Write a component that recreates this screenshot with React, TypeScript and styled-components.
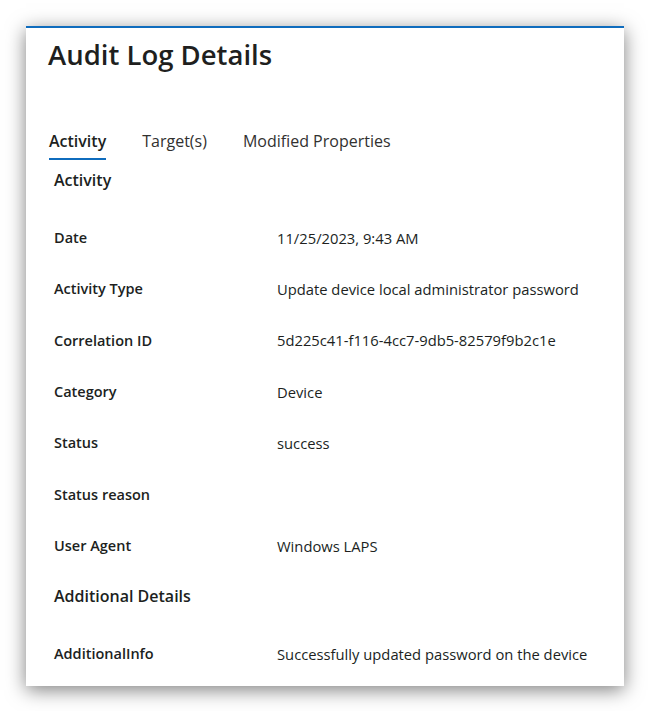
import React from 'react';
import styled, { createGlobalStyle } from 'styled-components';

const GlobalStyle = createGlobalStyle`
  html, body {
    margin: 0;
    padding: 0;
    background: #ffffff;
  }
  body {
    font-family: "Open Sans", "Noto Sans", "Liberation Sans", sans-serif;
    color: #201f1e;
  }
`;

const Page = styled.div`
  padding: 26px 24px 25px 26px;
`;

const Card = styled.div`
  width: 598px;
  height: 660px;
  box-sizing: border-box;
  background: #ffffff;
  border-top: 2px solid #0f6cbd;
  box-shadow: 0 4px 18px rgba(0, 0, 0, 0.5);
  padding: 9px 22px 0 22px;
  overflow: hidden;
`;

const Title = styled.h1`
  margin: 0;
  font-size: 27.5px;
  line-height: 36px;
  font-weight: 600;
  color: #201f1e;
`;

const TabList = styled.div`
  display: flex;
  gap: 36px;
  margin-top: 57px;
  padding-left: 1px;
`;

const Tab = styled.div<{ $active?: boolean }>`
  font-size: 16px;
  line-height: 22px;
  padding-bottom: 6px;
  color: ${p => (p.$active ? '#201f1e' : '#323130')};
  font-weight: ${p => (p.$active ? 600 : 400)};
  border-bottom: 2px solid ${p => (p.$active ? '#0f6cbd' : 'transparent')};
`;

const Section = styled.div`
  padding-left: 6px;
`;

const SectionTitle = styled.h2<{ $first?: boolean }>`
  margin: ${p => (p.$first ? '8px' : '13px')} 0 20px 0;
  font-size: 16px;
  line-height: 24px;
  font-weight: 600;
`;

const Row = styled.div`
  display: grid;
  grid-template-columns: 223px 1fr;
  align-items: center;
  height: 51.33px;
`;

const Label = styled.div`
  font-size: 14.5px;
  font-weight: 600;
  color: #201f1e;
`;

const Value = styled.div`
  font-size: 14.75px;
  color: #201f1e;
`;

const activity: [string, string][] = [
  ['Date', '11/25/2023, 9:43 AM'],
  ['Activity Type', 'Update device local administrator password'],
  ['Correlation ID', '5d225c41-f116-4cc7-9db5-82579f9b2c1e'],
  ['Category', 'Device'],
  ['Status', 'success'],
  ['Status reason', ''],
  ['User Agent', 'Windows LAPS'],
];

export default function App() {
  return (
    <>
      <GlobalStyle />
      <Page>
        <Card>
          <Title>Audit Log Details</Title>
          <TabList>
            <Tab $active>Activity</Tab>
            <Tab>Target(s)</Tab>
            <Tab>Modified Properties</Tab>
          </TabList>
          <Section>
            <SectionTitle $first>Activity</SectionTitle>
            {activity.map(([label, value]) => (
              <Row key={label}>
                <Label>{label}</Label>
                <Value>{value}</Value>
              </Row>
            ))}
            <SectionTitle>Additional Details</SectionTitle>
            <Row>
              <Label>AdditionalInfo</Label>
              <Value>Successfully updated password on the device</Value>
            </Row>
          </Section>
        </Card>
      </Page>
    </>
  );
}
